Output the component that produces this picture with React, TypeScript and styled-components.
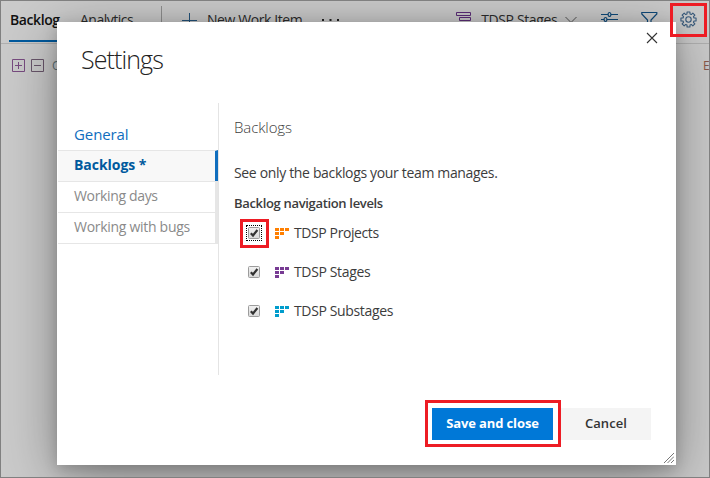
import React from 'react';
import styled, { createGlobalStyle } from 'styled-components';

const GlobalStyle = createGlobalStyle`
  * { box-sizing: border-box; }
  body { margin: 0; font-family: "Open Sans", "Noto Sans", sans-serif; font-size: 14px; color: #3c3c3c; }
  button { font-family: inherit; border: 0; padding: 0; background: none; }
`;

const Screen = styled.div`
  position: relative;
  width: 710px;
  height: 478px;
  overflow: hidden;
  border: 1px solid #808080;
  background: #cbcbcb;
`;

const Toolbar = styled.header`
  display: flex;
  align-items: center;
  height: 43px;
  padding-bottom: 5px;
  border-bottom: 1px solid #b0b0b0;
  padding-left: 8px;
  white-space: pre;
  line-height: 20px;
  color: #2c2c2c;
`;

const Tab = styled.button<{ $active?: boolean }>`
  align-self: stretch;
  width: ${p => (p.$active ? 56 : 70)}px;
  height: 41px;
  padding: 0 0 ${p => (p.$active ? 2 : 4)}px 1px;
  text-align: left;
  font-size: 14px;
  font-weight: ${p => (p.$active ? 600 : 400)};
  letter-spacing: ${p => (p.$active ? -0.4 : -0.5)}px;
  color: ${p => (p.$active ? '#111' : '#2c2c2c')};
  border-bottom: ${p => (p.$active ? '2px solid #005a9e' : '0')};
  margin-right: ${p => (p.$active ? 14 : 0)}px;
`;

const Separator = styled.i`
  width: 1px;
  height: 27px;
  margin: 0 20px 0 12px;
  background: #8f8f8f;
`;

const ToolLabel = styled.span<{ $gapAfter: number; $tracking: number }>`
  margin-left: 9px;
  margin-right: ${p => p.$gapAfter}px;
  letter-spacing: ${p => p.$tracking}px;
`;

const ToolIcon = styled.svg<{ $after?: number }>`
  flex: none;
  display: block;
  margin-right: ${p => p.$after ?? 0}px;
  fill: none;
`;

const Columns = styled.div`
  display: flex;
  align-items: center;
  height: 42px;
  padding: 0 0 0 11px;
  font-size: 12px;
  color: #5f7277;
`;

const ColumnEnd = styled.span`
  margin-left: auto;
  width: 6px;
  overflow: visible;
  color: #8a5848;
`;

const ColumnName = styled.span`
  margin-left: 2px;
`;

const Dialog = styled.section`
  position: absolute;
  left: 56px;
  top: 21px;
  width: 619px;
  height: 443px;
  display: flex;
  flex-direction: column;
  background: #fff;
  box-shadow: 0 12px 55px rgba(0, 0, 0, 0.36), 0 4px 14px rgba(0, 0, 0, 0.2);
`;

const DialogHeader = styled.div`
  display: flex;
  justify-content: space-between;
  height: 81px;
  padding: 10px 18px 0 24px;
`;

const Title = styled.h1`
  margin: 9px 0 0;
  font-size: 25px;
  font-weight: 300;
  line-height: 36px;
  letter-spacing: -0.9px;
  color: #222;
`;

const DialogBody = styled.div`
  display: flex;
  height: 272px;
`;

const Nav = styled.nav`
  display: flex;
  flex-direction: column;
  width: 162px;
  padding: 16px 0 0 1px;
  border-right: 1px solid #e4e4e4;
`;

const NavGroup = styled.div`
  height: 31px;
  padding-left: 16px;
  font-size: 15px;
  line-height: 31px;
  letter-spacing: -0.1px;
  color: #106ebe;
`;

const NavItem = styled.div<{ $active?: boolean; $tracking: number }>`
  height: 31px;
  padding-left: 16px;
  line-height: 28px;
  font-size: 14px;
  font-weight: ${p => (p.$active ? 700 : 400)};
  letter-spacing: ${p => p.$tracking}px;
  color: ${p => (p.$active ? '#005a9e' : '#8a8a8a')};
  background: ${p => (p.$active ? '#f8f8f8' : '#fff')};
  border-top: 1px solid #e6e6e6;
  border-right: 3px solid ${p => (p.$active ? '#106ebe' : '#e6e6e6')};
`;

const NavEnd = styled.div`
  border-top: 1px solid #e6e6e6;
`;

const Panel = styled.div`
  display: flex;
  flex-direction: column;
  padding: 12px 0 0 15px;
`;

const PanelTitle = styled.h2`
  margin: 0;
  font-size: 15px;
  font-weight: 300;
  line-height: 24px;
  letter-spacing: -0.1px;
`;

const Hint = styled.p`
  margin: 24px 0 0;
  line-height: 20px;
  font-size: 14px;
  letter-spacing: -0.34px;
`;

const GroupTitle = styled.h3`
  margin: 10px 0 0;
  line-height: 20px;
  font-size: 13px;
  font-weight: 600;
  letter-spacing: -0.33px;
`;

const Level = styled.label<{ $tracking: number }>`
  display: flex;
  align-items: center;
  height: 39px;
  padding-left: 12px;
  line-height: 20px;
  letter-spacing: ${p => p.$tracking}px;
`;

const CheckFrame = styled.span<{ $focused?: boolean }>`
  display: flex;
  padding: 1px;
  width: 16px;
  height: 16px;
  border: 1px dotted ${p => (p.$focused ? '#000' : 'transparent')};
  margin-right: 13px;
`;

const LevelIcon = styled.svg`
  margin: 1px 5px 0 0;
  display: block;
`;

const Footer = styled.div`
  display: flex;
  justify-content: flex-end;
  gap: 8px;
  padding: 33px 25px 0 0;
`;

const Button = styled.button<{ $primary?: boolean }>`
  width: ${p => (p.$primary ? 121 : 90)}px;
  height: 32px;
  padding-bottom: 2px;
  font-size: 13px;
  font-weight: ${p => (p.$primary ? 700 : 600)};
  letter-spacing: ${p => (p.$primary ? -0.12 : 0.1)}px;
  color: ${p => (p.$primary ? '#fff' : '#333')};
  background: ${p => (p.$primary ? '#0078d7' : '#f4f4f4')};
`;

const ResizeGrip = styled.svg`
  position: absolute;
  right: 2px;
  bottom: 2px;
`;

const Highlight = styled.div<{ $x: number; $y: number; $w: number; $h: number }>`
  position: absolute;
  left: ${p => p.$x}px;
  top: ${p => p.$y}px;
  width: ${p => p.$w}px;
  height: ${p => p.$h}px;
  border: 3px solid #ed1c24;
`;

const levels = [
  { name: 'TDSP Projects', color: '#ff7f00', tracking: -0.4, focused: true },
  { name: 'TDSP Stages', color: '#773b93', tracking: -0.36 },
  { name: 'TDSP Substages', color: '#009ccc', tracking: -0.36 },
];

function Checkbox({ focused }: { focused?: boolean }) {
  return (
    <CheckFrame $focused={focused}>
      <svg width="12" height="12">
        <defs>
          <linearGradient id="face" x1="0" y1="0" x2="0" y2="1">
            <stop offset="0" stopColor="#f2f2f2" />
            <stop offset="1" stopColor="#d8d8d8" />
          </linearGradient>
        </defs>
        <rect x="0.5" y="0.5" width="11" height="11" rx="1" fill="url(#face)" stroke="#9c9c9c" />
        <path d="M2.800 6.200 5 8.500 9.400 3" fill="none" stroke="#333" strokeWidth="2.2" />
      </svg>
    </CheckFrame>
  );
}

function Expander({ plus }: { plus?: boolean }) {
  return (
    <ToolIcon width="13" height="13" $after={6} stroke={plus ? '#784b80' : '#69566b'}>
      <path d={'M.5.5h12v12H.5zM3 6.5h7' + (plus ? 'M6.5 3v7' : '')} />
    </ToolIcon>
  );
}

function gearPath() {
  const pts: string[] = [];
  for (let i = 0; i < 8; i++) {
    const a = (i * Math.PI) / 4;
    [[-0.27, 5.7], [-0.19, 7.7], [0.19, 7.7], [0.27, 5.7]].forEach(([d, r]) =>
      pts.push(`${(8.5 + r * Math.cos(a + d)).toFixed(2)} ${(8.5 + r * Math.sin(a + d)).toFixed(2)}`),
    );
  }
  return 'M' + pts.join('L') + 'Z';
}

export default function App() {
  return (
    <>
      <GlobalStyle />
      <Screen>
        <Toolbar>
          <Tab $active>Backlog</Tab>
          <Tab>Analytics</Tab>
          <Separator />
          <ToolIcon width="16" height="16" stroke="#24547c">
            <path d="M0 8.5h15M7.5 1v15" />
          </ToolIcon>
          <ToolLabel $gapAfter={20} $tracking={-0.42}>New Work Item</ToolLabel>
          <ToolIcon width="17" height="4" $after={117}>
            <path d="M0 1h2v2H0zM7.500 1h2v2h-2zM15 1h2v2h-2z" fill="#222" />
          </ToolIcon>
          <ToolIcon width="16" height="17" stroke="#5c2d78">
            <path d="M.5 1.5h14v3H.5zM3.5 6.5h11v3h-11zM3.5 11.5h11v3h-11z" />
          </ToolIcon>
          <ToolLabel $gapAfter={8} $tracking={-0.38}>TDSP Stages</ToolLabel>
          <ToolIcon width="12" height="8" $after={24} stroke="#555">
            <path d="m.5 1 5.5 5.5L11.500 1" />
          </ToolIcon>
          <ToolIcon width="17" height="18" $after={23} stroke="#0f4a7a" strokeWidth="1.2">
            <path d="M0 3.500h7M10 3.500h7M0 8.500h3M6 8.500h11M0 13.500h9M12 13.500h5" />
            <ellipse cx="8.500" cy="3.500" rx="1.400" ry="2" />
            <ellipse cx="4.500" cy="8.500" rx="1.400" ry="2" />
            <ellipse cx="10.500" cy="13.500" rx="1.400" ry="2" />
          </ToolIcon>
          <ToolIcon width="17" height="17" $after={22} stroke="#0f4a7a" strokeWidth="1.2">
            <path d="M.8 1.500h15v1.500L10 9v7L6.500 13V9L.8 3z" />
          </ToolIcon>
          <ToolIcon width="17" height="17" stroke="#385a7c" strokeWidth="1.1">
            <path d={gearPath()} strokeLinejoin="round" />
            <circle cx="8.500" cy="8.500" r="2.700" />
          </ToolIcon>
        </Toolbar>
        <Columns>
          <Expander plus />
          <Expander />
          <ColumnName>Order</ColumnName>
          <ColumnEnd>E</ColumnEnd>
        </Columns>

        <Dialog>
          <DialogHeader>
            <Title>Settings</Title>
            <ToolIcon width="12" height="12" stroke="#333" strokeWidth="1.100">
              <path d="m1 1 10 10M11 1 1 11" />
            </ToolIcon>
          </DialogHeader>
          <DialogBody>
            <Nav>
              <NavGroup>General</NavGroup>
              <NavItem $active $tracking={-0.05}>Backlogs *</NavItem>
              <NavItem $tracking={-0.35}>Working days</NavItem>
              <NavItem $tracking={-0.29}>Working with bugs</NavItem>
              <NavEnd />
            </Nav>
            <Panel>
              <PanelTitle>Backlogs</PanelTitle>
              <Hint>See only the backlogs your team manages.</Hint>
              <GroupTitle>Backlog navigation levels</GroupTitle>
              {levels.map(l => (
                <Level key={l.name} $tracking={l.tracking}>
                  <Checkbox focused={l.focused} />
                  <LevelIcon width="14" height="11" fill={l.color} shapeRendering="crispEdges">
                    <path d="M0 0h4v3H0zM5 0h4v3H5zM10 0h4v3h-4zM0 4h4v3H0zM5 4h4v3H5zM0 8h4v3H0z" />
                  </LevelIcon>
                  {l.name}
                </Level>
              ))}
            </Panel>
          </DialogBody>
          <Footer>
            <Button $primary>Save and close</Button>
            <Button>Cancel</Button>
          </Footer>
          <ResizeGrip width="10" height="10">
            <path d="M0 10 10 0M3.500 10 10 3.500M7 10l3-3" stroke="#777" strokeWidth="1" />
          </ResizeGrip>
        </Dialog>

        <Highlight $x={669} $y={2} $w={37} $h={34} />
        <Highlight $x={239} $y={218} $w={29} $h={29} />
        <Highlight $x={424} $y={399} $w={136} $h={47} />
      </Screen>
    </>
  );
}
